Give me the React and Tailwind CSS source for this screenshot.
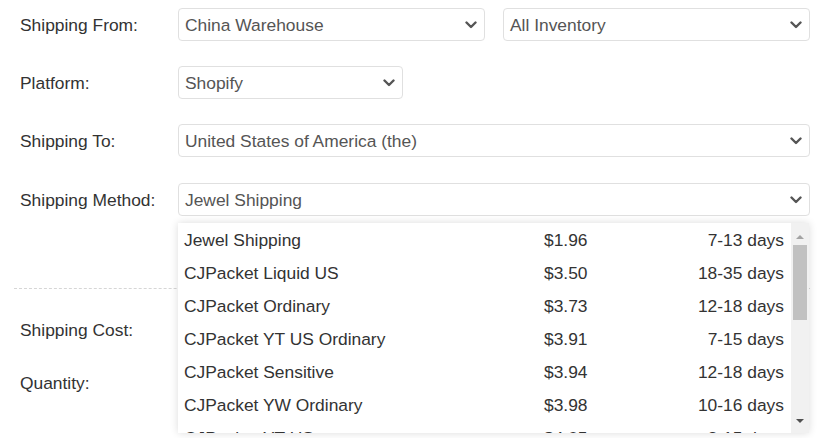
import React from "react";

function Chevron() {
  return (
    <svg width="12" height="8" viewBox="0 0 12 8" className="absolute right-[7px] top-1/2 -translate-y-1/2">
      <polyline points="1.5,1.5 6,6 10.5,1.5" fill="none" stroke="#555" strokeWidth="2.4" strokeLinecap="round" strokeLinejoin="round" />
    </svg>
  );
}

function Select({ value, className = "" }) {
  return (
    <div className={`relative flex h-[33px] items-center rounded-[4px] border border-[#e0e0e0] bg-white pl-[6px] pt-[2px] text-[17.4px] text-[#555] ${className}`}>
      {value}
      <Chevron />
    </div>
  );
}

function Row({ label, children, className = "" }) {
  return (
    <div className={`flex items-center ${className}`}>
      <div className="w-[158px] shrink-0 pt-[2px] text-[17.4px] text-[#333]">{label}</div>
      <div className="flex flex-1 gap-[18px]">{children}</div>
    </div>
  );
}

const options = [
  ["Jewel Shipping", "$1.96", "7-13 days"],
  ["CJPacket Liquid US", "$3.50", "18-35 days"],
  ["CJPacket Ordinary", "$3.73", "12-18 days"],
  ["CJPacket YT US Ordinary", "$3.91", "7-15 days"],
  ["CJPacket Sensitive", "$3.94", "12-18 days"],
  ["CJPacket YW Ordinary", "$3.98", "10-16 days"],
  ["CJPacket YT US", "$4.05", "8-15 days"],
];

export default function App() {
  return (
    <div className="relative h-[438px] w-[817px] overflow-hidden bg-white font-['Liberation_Sans',Arial,sans-serif]">
      <div className="flex flex-col pl-[20px] pr-[7px] pt-[8px]">
        <Row label="Shipping From:">
          <Select value="China Warehouse" className="flex-1" />
          <Select value="All Inventory" className="flex-1" />
        </Row>
        <Row label="Platform:" className="mt-[25px]">
          <Select value="Shopify" className="w-[225px]" />
        </Row>
        <Row label="Shipping To:" className="mt-[25px]">
          <Select value="United States of America (the)" className="flex-1" />
        </Row>
        <Row label="Shipping Method:" className="mt-[26px]">
          <Select value="Jewel Shipping" className="flex-1 h-[32px]" />
        </Row>
        <div className="ml-[-6px] mt-[72px] border-t border-dashed border-[#d6d6d6]" />
        <div className="mt-[31px] text-[17.4px] leading-[20px] text-[#333]">Shipping Cost:</div>
        <div className="mt-[33px] text-[17.4px] leading-[20px] text-[#333]">Quantity:</div>
      </div>

      <div className="absolute left-[178px] top-[223px] flex h-[210px] w-[631px] bg-white shadow-[0_0_8px_rgba(0,0,0,0.14)]">
        <div className="flex-1 overflow-hidden">
          {options.map(([n, p, d]) => (
            <div key={n} className="flex h-[33px] items-center pl-[6px] pr-[7px] pt-[2px] text-[17.4px] text-[#333]">
              <div className="w-[360px]">{n}</div>
              <div className="w-[100px]">{p}</div>
              <div className="flex-1 text-right">{d}</div>
            </div>
          ))}
        </div>
        <div className="relative w-[18px] bg-[#f1f1f1]">
          <svg width="18" height="20" className="absolute left-0 top-[4px]" viewBox="0 0 18 20">
            <polygon points="5,12 13,12 9,8" fill="#a3a3a3" />
          </svg>
          <div className="absolute left-[2px] right-[2px] top-[22px] h-[75px] bg-[#c1c1c1]" />
          <svg width="18" height="20" className="absolute bottom-[2px] left-0" viewBox="0 0 18 20">
            <polygon points="5,8 13,8 9,12" fill="#505050" />
          </svg>
        </div>
      </div>
    </div>
  );
}
